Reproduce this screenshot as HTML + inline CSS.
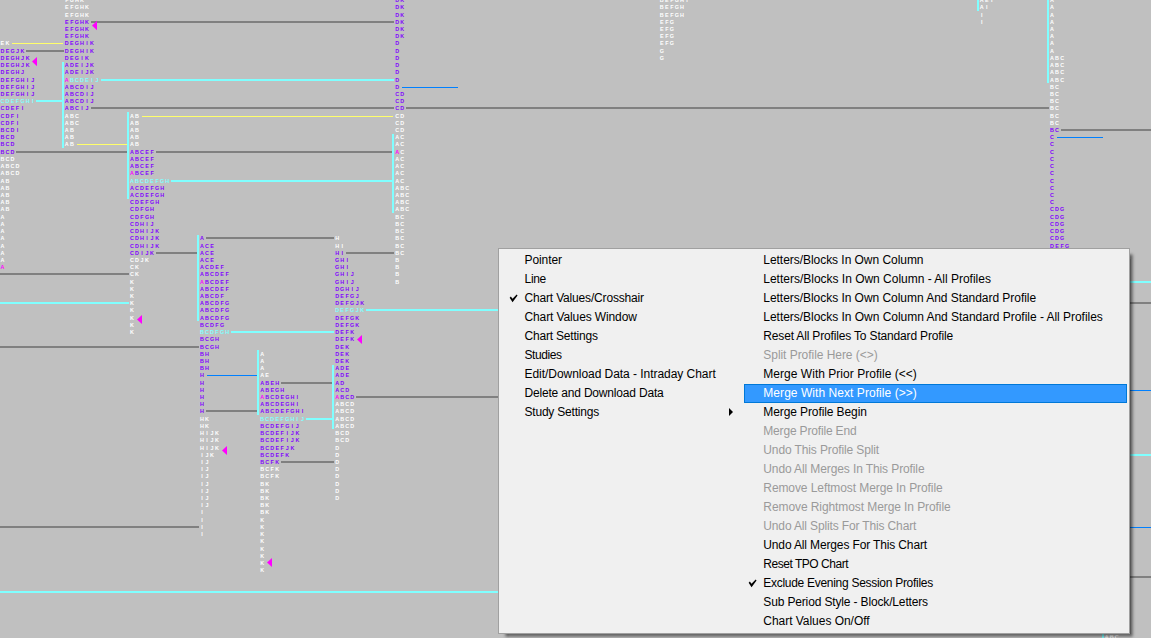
<!DOCTYPE html>
<html lang="en"><head><meta charset="utf-8"><title>TPO Chart</title>
<style>
html,body{margin:0;padding:0}
body{width:1151px;height:638px;overflow:hidden;background:#c0c0c0;position:relative;font-family:"Liberation Sans",Arial,sans-serif}
.ch{position:absolute;left:0;top:0;display:block}
.menu{position:absolute;left:498px;top:248px;width:630px;height:384px;background:#f0f0f0;border:1px solid #a0a0a0;box-shadow:5px 4.3px 3px -1.6px rgba(0,0,0,.55);font-size:12px;color:#000}
.it{position:absolute;white-space:nowrap;height:19px;line-height:19px}
.it.d{color:#9a9a9a}
.it.h{color:#fff}
.hl{position:absolute;left:245px;top:135px;width:381px;height:17px;background:#3399ff;border:1px solid #0078d7}
.ckw{position:absolute;width:10px;height:9px;line-height:0}
.ck{display:block}
.arr{position:absolute;width:0;height:0;border-left:4.5px solid #000;border-top:4px solid transparent;border-bottom:4px solid transparent}
</style></head>
<body>
<svg class="ch" width="1151" height="638" viewBox="0 0 1151 638" font-family="Liberation Sans, Arial, sans-serif" font-size="6" font-weight="bold" text-anchor="middle" shape-rendering="crispEdges">
<rect x="91" y="21" width="303" height="2" fill="#808080"/>
<rect x="26" y="50" width="38" height="2" fill="#808080"/>
<rect x="91" y="107" width="303" height="2" fill="#808080"/>
<rect x="406" y="107" width="643" height="2" fill="#808080"/>
<rect x="16" y="151" width="111" height="2" fill="#808080"/>
<rect x="156" y="151" width="236" height="2" fill="#808080"/>
<rect x="206" y="237" width="128" height="2" fill="#808080"/>
<rect x="156" y="252" width="41" height="2" fill="#808080"/>
<rect x="346" y="252" width="48" height="2" fill="#808080"/>
<rect x="0" y="273" width="129" height="2" fill="#808080"/>
<rect x="0" y="346" width="199" height="2" fill="#808080"/>
<rect x="281" y="382" width="51" height="2" fill="#808080"/>
<rect x="356" y="396" width="144" height="2" fill="#808080"/>
<rect x="206" y="410" width="51" height="2" fill="#808080"/>
<rect x="281" y="461" width="53" height="2" fill="#808080"/>
<rect x="0" y="526" width="199" height="2" fill="#808080"/>
<rect x="1061" y="129" width="90" height="2" fill="#808080"/>
<rect x="1128" y="302" width="23" height="2" fill="#808080"/>
<rect x="1128" y="576" width="23" height="2" fill="#808080"/>
<rect x="101" y="79" width="293" height="2" fill="#80ffff"/>
<rect x="36" y="100" width="26" height="2" fill="#80ffff"/>
<rect x="171" y="180" width="223" height="2" fill="#80ffff"/>
<rect x="0" y="302" width="129" height="2" fill="#80ffff"/>
<rect x="366" y="309" width="134" height="2" fill="#80ffff"/>
<rect x="231" y="331" width="103" height="2" fill="#80ffff"/>
<rect x="306" y="418" width="26" height="2" fill="#80ffff"/>
<rect x="0" y="591" width="500" height="2" fill="#80ffff"/>
<rect x="1128" y="281" width="23" height="2" fill="#80ffff"/>
<rect x="1128" y="454" width="23" height="2" fill="#80ffff"/>
<rect x="142" y="116" width="251" height="1" fill="#ffff6a"/>
<rect x="12" y="43" width="51" height="1" fill="#ffff6a"/>
<rect x="77" y="144" width="50" height="1" fill="#ffff6a"/>
<rect x="402" y="87" width="56" height="1" fill="#0080ff"/>
<rect x="207" y="375" width="50" height="1" fill="#0080ff"/>
<rect x="1057" y="137" width="46" height="1" fill="#0080ff"/>
<rect x="1128" y="390" width="23" height="1" fill="#0080ff"/>
<rect x="1128" y="527" width="23" height="1" fill="#0080ff"/>
<rect x="62" y="62" width="2" height="86" fill="#80ffff"/>
<rect x="127" y="112" width="2" height="87" fill="#80ffff"/>
<rect x="197" y="235" width="2" height="86" fill="#80ffff"/>
<rect x="257" y="350" width="2" height="65" fill="#80ffff"/>
<rect x="332" y="365" width="2" height="64" fill="#80ffff"/>
<rect x="392" y="134" width="2" height="79" fill="#80ffff"/>
<rect x="977" y="0" width="2" height="11" fill="#80ffff"/>
<rect x="1047" y="0" width="2" height="83" fill="#80ffff"/>
<rect x="1102" y="634" width="2" height="4" fill="#80ffff"/>
<path d="M32 61.6L37 57.0V66.2Z" fill="#ff00ff" shape-rendering="geometricPrecision"/>
<path d="M92 25.6L97 21.0V30.200000000000003Z" fill="#ff00ff" shape-rendering="geometricPrecision"/>
<path d="M137 319.5L142 314.9V324.1Z" fill="#ff00ff" shape-rendering="geometricPrecision"/>
<path d="M222 450.5L227 445.9V455.1Z" fill="#ff00ff" shape-rendering="geometricPrecision"/>
<path d="M267 562.5L272 557.9V567.1Z" fill="#ff00ff" shape-rendering="geometricPrecision"/>
<path d="M357 339.5L362 334.9V344.1Z" fill="#ff00ff" shape-rendering="geometricPrecision"/>
<g fill="#ffffff" transform="scale(0.9,1)">
<text x="2.67 8.27" y="45">EK</text>
<text x="2.67 8.27 13.87" y="161">BCD</text>
<text x="2.67 8.27 13.87 19.47" y="168">ABCD</text>
<text x="2.67 8.27 13.87 19.47" y="175">ABCD</text>
<text x="2.67 8.27" y="183">AB</text>
<text x="2.67 8.27" y="190">AB</text>
<text x="2.67 8.27" y="197">AB</text>
<text x="2.67 8.27" y="204">AB</text>
<text x="2.67 8.27" y="211">AB</text>
<text x="2.67" y="219">A</text>
<text x="2.67" y="226">A</text>
<text x="2.67" y="233">A</text>
<text x="2.67" y="240">A</text>
<text x="2.67" y="248">A</text>
<text x="2.67" y="255">A</text>
<text x="2.67" y="262">A</text>
<text x="74.22 79.82 85.42 91.02" y="2">FGHK</text>
<text x="74.22 79.82 85.42 91.02 96.62" y="9">EFGHK</text>
<text x="74.22 79.82 85.42 91.02 96.62" y="17">EFGHK</text>
<text x="74.22 79.82 85.42" y="118">ABC</text>
<text x="74.22 79.82 85.42" y="125">ABC</text>
<text x="74.22 79.82" y="132">AB</text>
<text x="74.22 79.82" y="139">AB</text>
<text x="74.22 79.82" y="146">AB</text>
<text x="146.56 152.16" y="118">AB</text>
<text x="146.56 152.16" y="125">AB</text>
<text x="146.56 152.16" y="132">AB</text>
<text x="146.56 152.16" y="139">AB</text>
<text x="146.56 152.16" y="146">AB</text>
<text x="146.56 152.16 157.76 163.36" y="262">CDJK</text>
<text x="146.56 152.16" y="269">CK</text>
<text x="146.56 152.16" y="276">CK</text>
<text x="146.56" y="284">K</text>
<text x="146.56" y="291">K</text>
<text x="146.56" y="298">K</text>
<text x="146.56" y="305">K</text>
<text x="146.56" y="312">K</text>
<text x="146.56" y="320">K</text>
<text x="146.56" y="327">K</text>
<text x="146.56" y="334">K</text>
<text x="224.33 229.93" y="421">HK</text>
<text x="224.33 229.93" y="428">HK</text>
<text x="224.33 229.93 235.53 241.13" y="435">HIJK</text>
<text x="224.33 229.93 235.53 241.13" y="442">HIJK</text>
<text x="224.33 229.93 235.53 241.13" y="450">HIJK</text>
<text x="224.33 229.93 235.53" y="457">IJK</text>
<text x="224.33 229.93" y="464">IJ</text>
<text x="224.33 229.93" y="471">IJ</text>
<text x="224.33 229.93" y="478">IJ</text>
<text x="224.33 229.93" y="486">IJ</text>
<text x="224.33 229.93" y="493">IJ</text>
<text x="224.33 229.93" y="500">IJ</text>
<text x="224.33 229.93" y="507">IJ</text>
<text x="224.33" y="514">I</text>
<text x="224.33" y="522">I</text>
<text x="224.33" y="529">I</text>
<text x="224.33" y="536">I</text>
<text x="291.22" y="356">A</text>
<text x="291.22" y="363">A</text>
<text x="291.22" y="370">A</text>
<text x="291.22 296.82" y="377">AE</text>
<text x="291.22 296.82 302.42 308.02" y="471">BCFK</text>
<text x="291.22 296.82 302.42 308.02" y="478">BCFK</text>
<text x="291.22 296.82" y="486">BK</text>
<text x="291.22 296.82" y="493">BK</text>
<text x="291.22 296.82" y="500">BK</text>
<text x="291.22 296.82" y="507">BK</text>
<text x="291.22 296.82" y="514">BK</text>
<text x="291.22" y="522">K</text>
<text x="291.22" y="529">K</text>
<text x="291.22" y="536">K</text>
<text x="291.22" y="543">K</text>
<text x="291.22" y="551">K</text>
<text x="291.22" y="558">K</text>
<text x="291.22" y="565">K</text>
<text x="291.22" y="572">K</text>
<text x="374.56" y="240">H</text>
<text x="374.56 380.16" y="248">HI</text>
<text x="374.56 380.16 385.76 391.36" y="406">ABCD</text>
<text x="374.56 380.16 385.76 391.36" y="413">ABCD</text>
<text x="374.56 380.16 385.76 391.36" y="421">ABCD</text>
<text x="374.56 380.16 385.76 391.36" y="428">ABCD</text>
<text x="374.56 380.16 385.76" y="435">BCD</text>
<text x="374.56 380.16 385.76" y="442">BCD</text>
<text x="374.56" y="450">D</text>
<text x="374.56" y="457">D</text>
<text x="374.56" y="464">D</text>
<text x="374.56" y="471">D</text>
<text x="374.56" y="478">D</text>
<text x="374.56" y="486">D</text>
<text x="374.56" y="493">D</text>
<text x="374.56" y="500">D</text>
<text x="441.22 446.82" y="118">CD</text>
<text x="441.22 446.82" y="125">CD</text>
<text x="441.22 446.82" y="132">CD</text>
<text x="441.22 446.82" y="139">AC</text>
<text x="441.22 446.82" y="146">AC</text>
<text x="441.22 446.82" y="154"><tspan fill="#ff00ff">A</tspan>C</text>
<text x="441.22 446.82" y="161">AC</text>
<text x="441.22 446.82" y="168">AC</text>
<text x="441.22 446.82" y="175">AC</text>
<text x="441.22 446.82" y="183">AC</text>
<text x="441.22 446.82 452.42" y="190">ABC</text>
<text x="441.22 446.82 452.42" y="197">ABC</text>
<text x="441.22 446.82 452.42" y="204">ABC</text>
<text x="441.22 446.82 452.42" y="211">ABC</text>
<text x="441.22 446.82" y="219">BC</text>
<text x="441.22 446.82" y="226">BC</text>
<text x="441.22 446.82" y="233">BC</text>
<text x="441.22 446.82" y="240">BC</text>
<text x="441.22 446.82" y="248">BC</text>
<text x="441.22 446.82" y="255">BC</text>
<text x="441.22" y="262">B</text>
<text x="441.22" y="269">B</text>
<text x="441.22" y="276">B</text>
<text x="441.22" y="284">B</text>
<text x="735.33 740.93 746.53 752.13 757.73 763.33" y="2">BEFGHI</text>
<text x="735.33 740.93 746.53 752.13 757.73" y="9">BEFGH</text>
<text x="735.33 740.93 746.53 752.13 757.73" y="17">BEFGH</text>
<text x="735.33 740.93 746.53" y="24">EFG</text>
<text x="735.33 740.93 746.53" y="31">EFG</text>
<text x="735.33 740.93 746.53" y="38">EFG</text>
<text x="735.33 740.93 746.53" y="45">EFG</text>
<text x="735.33" y="53">G</text>
<text x="735.33" y="60">G</text>
<text x="1090.89 1096.49 1102.09" y="2">AEI</text>
<text x="1090.89 1096.49" y="9">AI</text>
<text x="1090.89" y="17">I</text>
<text x="1090.89" y="24">I</text>
<text x="1168.89" y="2">A</text>
<text x="1168.89" y="9">A</text>
<text x="1168.89" y="17">A</text>
<text x="1168.89" y="24">A</text>
<text x="1168.89" y="31">A</text>
<text x="1168.89" y="38">A</text>
<text x="1168.89" y="45">A</text>
<text x="1168.89" y="53">A</text>
<text x="1168.89 1174.49 1180.09" y="60">ABC</text>
<text x="1168.89 1174.49 1180.09" y="67">ABC</text>
<text x="1168.89 1174.49 1180.09" y="74">ABC</text>
<text x="1168.89 1174.49 1180.09" y="82">ABC</text>
<text x="1168.89 1174.49" y="89">BC</text>
<text x="1168.89 1174.49" y="96">BC</text>
<text x="1168.89 1174.49" y="103">BC</text>
<text x="1168.89 1174.49" y="110">BC</text>
<text x="1168.89 1174.49" y="118">BC</text>
<text x="1168.89 1174.49" y="125">BC</text>
<text x="1229.56 1235.16 1240.76" y="639">ABC</text>
</g>
<g fill="#8000ff" transform="scale(0.9,1)">
<text x="2.67 8.27 13.87 19.47 25.07" y="53">DEGJK</text>
<text x="2.67 8.27 13.87 19.47 25.07 30.67" y="60">DEGHJK</text>
<text x="2.67 8.27 13.87 19.47 25.07 30.67" y="67">DEGHJK</text>
<text x="2.67 8.27 13.87 19.47 25.07" y="74">DEGHJ</text>
<text x="2.67 8.27 13.87 19.47 25.07 30.67 36.27" y="82">DEFGHIJ</text>
<text x="2.67 8.27 13.87 19.47 25.07 30.67 36.27" y="89">DEFGHIJ</text>
<text x="2.67 8.27 13.87 19.47 25.07 30.67 36.27" y="96">DEFGHIJ</text>
<text x="2.67 8.27 13.87 19.47 25.07" y="110">CDEFI</text>
<text x="2.67 8.27 13.87 19.47" y="118">CDFI</text>
<text x="2.67 8.27 13.87 19.47" y="125">CDFI</text>
<text x="2.67 8.27 13.87 19.47" y="132">BCDI</text>
<text x="2.67 8.27 13.87" y="139">BCD</text>
<text x="2.67 8.27 13.87" y="146">BCD</text>
<text x="2.67 8.27 13.87" y="154">BCD</text>
<text x="74.22 79.82 85.42 91.02 96.62" y="24">EFGHK</text>
<text x="74.22 79.82 85.42 91.02 96.62" y="31">EFGHK</text>
<text x="74.22 79.82 85.42 91.02 96.62" y="38">EFGHK</text>
<text x="74.22 79.82 85.42 91.02 96.62 102.22" y="45">DEGHIK</text>
<text x="74.22 79.82 85.42 91.02 96.62 102.22" y="53">DEGHIK</text>
<text x="74.22 79.82 85.42 91.02 96.62" y="60">DEGIK</text>
<text x="74.22 79.82 85.42 91.02 96.62 102.22" y="67">ADEIJK</text>
<text x="74.22 79.82 85.42 91.02 96.62 102.22" y="74">ADEIJK</text>
<text x="74.22 79.82 85.42 91.02 96.62 102.22" y="89">ABCDIJ</text>
<text x="74.22 79.82 85.42 91.02 96.62 102.22" y="96">ABCDIJ</text>
<text x="74.22 79.82 85.42 91.02 96.62 102.22" y="103">ABCDIJ</text>
<text x="74.22 79.82 85.42 91.02 96.62" y="110">ABCIJ</text>
<text x="146.56 152.16 157.76 163.36 168.96" y="154">ABCEF</text>
<text x="146.56 152.16 157.76 163.36 168.96" y="161">ABCEF</text>
<text x="146.56 152.16 157.76 163.36 168.96" y="168">ABCEF</text>
<text x="146.56 152.16 157.76 163.36 168.96" y="175"><tspan fill="#ff00ff">A</tspan>BCEF</text>
<text x="146.56 152.16 157.76 163.36 168.96 174.56 180.16" y="190">ACDEFGH</text>
<text x="146.56 152.16 157.76 163.36 168.96 174.56 180.16" y="197">ACDEFGH</text>
<text x="146.56 152.16 157.76 163.36 168.96 174.56" y="204">CDEFGH</text>
<text x="146.56 152.16 157.76 163.36 168.96" y="211">CDFGH</text>
<text x="146.56 152.16 157.76 163.36 168.96" y="219">CDFGH</text>
<text x="146.56 152.16 157.76 163.36 168.96" y="226">CDHIJ</text>
<text x="146.56 152.16 157.76 163.36 168.96 174.56" y="233">CDHIJK</text>
<text x="146.56 152.16 157.76 163.36 168.96 174.56" y="240">CDHIJK</text>
<text x="146.56 152.16 157.76 163.36 168.96 174.56" y="248">CDHIJK</text>
<text x="146.56 152.16 157.76 163.36 168.96" y="255">CDIJK</text>
<text x="224.33" y="240">A</text>
<text x="224.33 229.93 235.53" y="248">ACE</text>
<text x="224.33 229.93 235.53" y="255">ACE</text>
<text x="224.33 229.93 235.53" y="262">ACE</text>
<text x="224.33 229.93 235.53 241.13 246.73" y="269">ACDEF</text>
<text x="224.33 229.93 235.53 241.13 246.73 252.33" y="276">ABCDEF</text>
<text x="224.33 229.93 235.53 241.13 246.73 252.33" y="284"><tspan fill="#ff00ff">A</tspan>BCDEF</text>
<text x="224.33 229.93 235.53 241.13 246.73 252.33" y="291">ABCDEF</text>
<text x="224.33 229.93 235.53 241.13 246.73" y="298">ABCDF</text>
<text x="224.33 229.93 235.53 241.13 246.73 252.33" y="305">ABCDFG</text>
<text x="224.33 229.93 235.53 241.13 246.73 252.33" y="312">ABCDFG</text>
<text x="224.33 229.93 235.53 241.13 246.73 252.33" y="320">ABCDFG</text>
<text x="224.33 229.93 235.53 241.13 246.73" y="327">BCDFG</text>
<text x="224.33 229.93 235.53 241.13" y="341">BCGH</text>
<text x="224.33 229.93 235.53 241.13" y="349">BCGH</text>
<text x="224.33 229.93" y="356">BH</text>
<text x="224.33 229.93" y="363">BH</text>
<text x="224.33 229.93" y="370">BH</text>
<text x="224.33" y="377">H</text>
<text x="224.33" y="385">H</text>
<text x="224.33" y="392">H</text>
<text x="224.33" y="399">H</text>
<text x="224.33" y="406">H</text>
<text x="224.33" y="413">H</text>
<text x="291.22 296.82 302.42 308.02" y="385">ABEH</text>
<text x="291.22 296.82 302.42 308.02 313.62" y="392">ABEGH</text>
<text x="291.22 296.82 302.42 308.02 313.62 319.22 324.82 330.42" y="399"><tspan fill="#ff00ff">A</tspan>BCDEGHI</text>
<text x="291.22 296.82 302.42 308.02 313.62 319.22 324.82 330.42" y="406">ABCDEGHI</text>
<text x="291.22 296.82 302.42 308.02 313.62 319.22 324.82 330.42 336.02" y="413">ABCDEFGHI</text>
<text x="291.22 296.82 302.42 308.02 313.62 319.22 324.82 330.42" y="428">BCDEFGIJ</text>
<text x="291.22 296.82 302.42 308.02 313.62 319.22 324.82 330.42" y="435">BCDEFIJK</text>
<text x="291.22 296.82 302.42 308.02 313.62 319.22 324.82 330.42" y="442">BCDEFIJK</text>
<text x="291.22 296.82 302.42 308.02 313.62 319.22 324.82" y="450">BCDEFJK</text>
<text x="291.22 296.82 302.42 308.02 313.62 319.22" y="457">BCDEFK</text>
<text x="291.22 296.82 302.42 308.02" y="464">BCFK</text>
<text x="374.56 380.16" y="255">HI</text>
<text x="374.56 380.16 385.76" y="262">GHI</text>
<text x="374.56 380.16 385.76" y="269">GHI</text>
<text x="374.56 380.16 385.76 391.36" y="276">GHIJ</text>
<text x="374.56 380.16 385.76 391.36" y="284">GHIJ</text>
<text x="374.56 380.16 385.76 391.36 396.96" y="291">DGHIJ</text>
<text x="374.56 380.16 385.76 391.36 396.96" y="298">DEFGJ</text>
<text x="374.56 380.16 385.76 391.36 396.96 402.56" y="305">DEFGJK</text>
<text x="374.56 380.16 385.76 391.36 396.96" y="320">DEFGK</text>
<text x="374.56 380.16 385.76 391.36 396.96" y="327">DEFGK</text>
<text x="374.56 380.16 385.76 391.36" y="334">DEFK</text>
<text x="374.56 380.16 385.76 391.36" y="341">DEFK</text>
<text x="374.56 380.16 385.76" y="349">DEK</text>
<text x="374.56 380.16 385.76" y="356">DEK</text>
<text x="374.56 380.16 385.76" y="363">DEK</text>
<text x="374.56 380.16 385.76" y="370">ADE</text>
<text x="374.56 380.16 385.76" y="377">ADE</text>
<text x="374.56 380.16" y="385">AD</text>
<text x="374.56 380.16 385.76" y="392">ACD</text>
<text x="374.56 380.16 385.76 391.36" y="399"><tspan fill="#ff00ff">A</tspan>BCD</text>
<text x="441.22 446.82" y="2">DK</text>
<text x="441.22 446.82" y="9">DK</text>
<text x="441.22 446.82" y="17">DK</text>
<text x="441.22 446.82" y="24">DK</text>
<text x="441.22 446.82" y="31">DK</text>
<text x="441.22 446.82" y="38">DK</text>
<text x="441.22" y="45">D</text>
<text x="441.22" y="53">D</text>
<text x="441.22" y="60">D</text>
<text x="441.22" y="67">D</text>
<text x="441.22" y="74">D</text>
<text x="441.22" y="82">D</text>
<text x="441.22" y="89">D</text>
<text x="441.22 446.82" y="96">CD</text>
<text x="441.22 446.82" y="103">CD</text>
<text x="441.22 446.82" y="110">CD</text>
<text x="1168.89 1174.49" y="132">BC</text>
<text x="1168.89" y="139">C</text>
<text x="1168.89" y="146">C</text>
<text x="1168.89" y="154">C</text>
<text x="1168.89" y="161">C</text>
<text x="1168.89" y="168">C</text>
<text x="1168.89" y="175">C</text>
<text x="1168.89" y="183">C</text>
<text x="1168.89" y="190">C</text>
<text x="1168.89" y="197">C</text>
<text x="1168.89" y="204">C</text>
<text x="1168.89 1174.49 1180.09" y="211">CDG</text>
<text x="1168.89 1174.49 1180.09" y="219">CDG</text>
<text x="1168.89 1174.49 1180.09" y="226">CDG</text>
<text x="1168.89 1174.49 1180.09" y="233">CDG</text>
<text x="1168.89 1174.49 1180.09" y="240">CDG</text>
<text x="1168.89 1174.49 1180.09 1185.69" y="248">DEFG</text>
</g>
<g fill="#80ffff" transform="scale(0.9,1)">
<text x="2.67 8.27 13.87 19.47 25.07 30.67 36.27" y="103">CDEFGHI</text>
<text x="74.22 79.82 85.42 91.02 96.62 102.22 107.82" y="82"><tspan fill="#ff00ff">A</tspan>BCDEIJ</text>
<text x="146.56 152.16 157.76 163.36 168.96 174.56 180.16 185.76" y="183">ABCDEFGH</text>
<text x="224.33 229.93 235.53 241.13 246.73 252.33" y="334">BCDFGH</text>
<text x="291.22 296.82 302.42 308.02 313.62 319.22 324.82 330.42 336.02" y="421">BCDEFGHIJ</text>
<text x="374.56 380.16 385.76 391.36 396.96 402.56" y="312">DEFGJK</text>
</g>
<g fill="#ff00ff" transform="scale(0.9,1)">
<text x="2.67" y="269">A</text>
</g>
</svg>
<div class="menu">
<div class="hl"></div>
<div class="it" style="left:25.5px;top:2px;letter-spacing:-0.076px">Pointer</div>
<div class="it" style="left:25.5px;top:21px;letter-spacing:-0.297px">Line</div>
<div class="it" style="left:25.5px;top:40px;letter-spacing:-0.171px">Chart Values/Crosshair</div>
<div class="ckw" style="left:10px;top:45px"><svg class="ck" width="10" height="9" viewBox="0 0 10 9"><path transform="translate(0.65,0.6)" d="M0 3.1L1.2 1.8L2.9 4.2L7 0L7.9 0.9L2.9 7.6Z" fill="#000"/></svg></div>
<div class="it" style="left:25.5px;top:59px;letter-spacing:-0.116px">Chart Values Window</div>
<div class="it" style="left:25.5px;top:78px;letter-spacing:-0.196px">Chart Settings</div>
<div class="it" style="left:25.5px;top:97px;letter-spacing:-0.404px">Studies</div>
<div class="it" style="left:25.5px;top:116px;letter-spacing:-0.045px">Edit/Download Data - Intraday Chart</div>
<div class="it" style="left:25.5px;top:135px;letter-spacing:-0.181px">Delete and Download Data</div>
<div class="it" style="left:25.5px;top:154px;letter-spacing:-0.206px">Study Settings</div>
<div class="arr" style="left:230px;top:158.5px"></div>
<div class="it" style="left:264.3px;top:2px;letter-spacing:-0.043px">Letters/Blocks In Own Column</div>
<div class="it" style="left:264.3px;top:21px;letter-spacing:-0.011px">Letters/Blocks In Own Column - All Profiles</div>
<div class="it" style="left:264.3px;top:40px;letter-spacing:-0.041px">Letters/Blocks In Own Column And Standard Profile</div>
<div class="it" style="left:264.3px;top:59px;letter-spacing:-0.031px">Letters/Blocks In Own Column And Standard Profile - All Profiles</div>
<div class="it" style="left:264.3px;top:78px;letter-spacing:-0.163px">Reset All Profiles To Standard Profile</div>
<div class="it d" style="left:264.3px;top:97px;letter-spacing:-0.047px">Split Profile Here (&lt;&gt;)</div>
<div class="it" style="left:264.3px;top:116px;letter-spacing:0.030px">Merge With Prior Profile (&lt;&lt;)</div>
<div class="it h" style="left:264.3px;top:135px;letter-spacing:0.055px">Merge With Next Profile (&gt;&gt;)</div>
<div class="it" style="left:264.3px;top:154px;letter-spacing:-0.100px">Merge Profile Begin</div>
<div class="it d" style="left:264.3px;top:173px;letter-spacing:-0.173px">Merge Profile End</div>
<div class="it d" style="left:264.3px;top:192px;letter-spacing:-0.122px">Undo This Profile Split</div>
<div class="it d" style="left:264.3px;top:211px;letter-spacing:-0.107px">Undo All Merges In This Profile</div>
<div class="it d" style="left:264.3px;top:230px;letter-spacing:-0.087px">Remove Leftmost Merge In Profile</div>
<div class="it d" style="left:264.3px;top:249px;letter-spacing:-0.084px">Remove Rightmost Merge In Profile</div>
<div class="it d" style="left:264.3px;top:268px;letter-spacing:-0.142px">Undo All Splits For This Chart</div>
<div class="it" style="left:264.3px;top:287px;letter-spacing:-0.138px">Undo All Merges For This Chart</div>
<div class="it" style="left:264.3px;top:306px;letter-spacing:-0.468px">Reset TPO Chart</div>
<div class="it" style="left:264.3px;top:325px;letter-spacing:-0.286px">Exclude Evening Session Profiles</div>
<div class="ckw" style="left:249px;top:330px"><svg class="ck" width="10" height="9" viewBox="0 0 10 9"><path transform="translate(0.65,0.6)" d="M0 3.1L1.2 1.8L2.9 4.2L7 0L7.9 0.9L2.9 7.6Z" fill="#000"/></svg></div>
<div class="it" style="left:264.3px;top:344px;letter-spacing:-0.148px">Sub Period Style - Block/Letters</div>
<div class="it" style="left:264.3px;top:363px;letter-spacing:-0.034px">Chart Values On/Off</div>
</div>
</body></html>
